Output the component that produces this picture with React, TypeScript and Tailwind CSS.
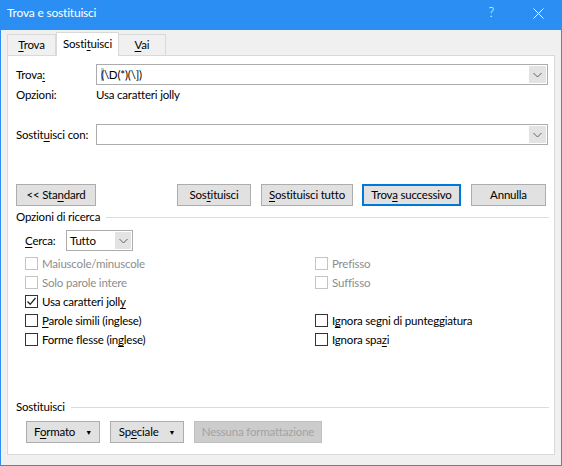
import React from "react";

const font = { fontFamily: 'Lato, "Noto Sans", "Liberation Sans", sans-serif' };

// label with one underlined mnemonic letter
function Mn({ text, at, className = "" }: { text: string; at?: number; className?: string }) {
  if (at === undefined) return <span className={"whitespace-nowrap " + className}>{text}</span>;
  return (
    <span className={"whitespace-nowrap " + className}>
      {text.slice(0, at)}
      <span className="underline underline-offset-2">{text[at]}</span>
      {text.slice(at + 1)}
    </span>
  );
}

function Chevron() {
  return (
    <svg width="9" height="6" viewBox="0 0 9 6" className="text-[#606060]">
      <path d="M0.5 1 L4.5 5 L8.5 1" fill="none" stroke="currentColor" strokeWidth="1" />
    </svg>
  );
}

function Combo({ children }: { children?: React.ReactNode }) {
  return (
    <div className="flex h-[21px] w-[452px] items-center border border-[#acacac] bg-white pl-[4px]">
      <div className="flex-1 truncate text-[11.5px] text-black">{children}</div>
      <div className="mr-[1px] flex h-[17px] w-[17px] items-center justify-center bg-[#e3e3e3]">
        <Chevron />
      </div>
    </div>
  );
}

function Btn({
  children,
  w,
  primary,
  disabled,
}: {
  children: React.ReactNode;
  w: string;
  primary?: boolean;
  disabled?: boolean;
}) {
  const base = "flex h-[22px] items-center justify-center whitespace-nowrap text-[11.5px] " + w;
  if (disabled)
    return <div className={base + " border border-[#bfbfbf] bg-[#cccccc] text-[#a3a3a3]"}>{children}</div>;
  if (primary)
    return <div className={base + " border-2 border-[#0078d7] bg-[#e1e1e1] text-black"}>{children}</div>;
  return <div className={base + " border border-[#adadad] bg-[#e1e1e1] text-black"}>{children}</div>;
}

function Check({
  label,
  at,
  checked,
  disabled,
}: {
  label: string;
  at?: number;
  checked?: boolean;
  disabled?: boolean;
}) {
  return (
    <div className="flex h-[19px] items-center">
      <div
        className={
          "flex h-[13px] w-[13px] items-center justify-center border bg-white " +
          (disabled ? "border-[#c4c4c4]" : "border-[#333333]")
        }
      >
        {checked && (
          <svg width="11" height="11" viewBox="0 0 11 11">
            <path d="M1.5 5.5 L4.2 8.3 L9.5 2" fill="none" stroke="#222" strokeWidth="1.3" />
          </svg>
        )}
      </div>
      <Mn text={label} at={at} className={"ml-[4px] text-[11.5px] " + (disabled ? "text-[#8d8d8d]" : "text-black")} />
    </div>
  );
}

function Section({ title }: { title: string }) {
  return (
    <div className="flex h-[16px] items-center pr-[5px]">
      <span className="whitespace-nowrap text-[11.5px] text-black">{title}</span>
      <div className="ml-[6px] h-px flex-1 bg-[#dcdcdc]" />
    </div>
  );
}

export default function App() {
  return (
    <div
      style={font}
      className="flex h-[466px] w-[562px] flex-col border border-t-0 border-[#2b8ef2] bg-[#f0f0f0] tracking-[-0.2px]"
    >
      {/* title bar */}
      <div className="-mx-px flex h-[30px] items-center bg-[#2b8ef2] pb-[4px] pl-[7px] text-white">
        <span className="flex-1 text-[12px]">Trova e sostituisci</span>
        <span className="mr-[39px] text-[13px] font-light">?</span>
        <svg width="11" height="11" viewBox="0 0 11 11" className="mr-[18px]">
          <path d="M0.5 0.5 L10.5 10.5 M10.5 0.5 L0.5 10.5" stroke="white" strokeWidth="1" />
        </svg>
      </div>

      {/* tabs */}
      <div className="flex h-[25px] items-end pl-[6px]">
        <div className="flex h-[21px] w-[49px] items-center justify-center border border-b-0 border-[#d9d9d9] text-[11.5px] text-black">
          <Mn text="Trova" at={0} />
        </div>
        <div className="relative z-10 -mb-px flex h-[24px] w-[63px] items-center justify-center border border-b-0 border-[#d9d9d9] bg-white pb-[2px] text-[11.5px] text-black">
          <Mn text="Sostituisci" at={5} />
        </div>
        <div className="flex h-[21px] w-[47px] items-center justify-center border border-b-0 border-l-0 border-[#d9d9d9] text-[11.5px] text-black">
          <Mn text="Vai" at={0} />
        </div>
      </div>

      {/* panel */}
      <div className="mx-[6px] h-[400px] border border-[#d9d9d9] bg-white pl-[8px]">
        <div className="mt-[8px] flex items-center">
          <Mn text="Trova:" at={5} className="w-[80px] text-[11.5px] text-black" />
          <Combo>
            <span className="bg-[#a9d0f2]">(</span>\D(*)(\])
          </Combo>
        </div>
        <div className="mt-[2px] flex h-[16px] items-center text-[11.5px] text-black">
          <span className="w-[80px]">Opzioni:</span>
          <span>Usa caratteri jolly</span>
        </div>
        <div className="mt-[21px] flex items-center">
          <Mn text="Sostituisci con:" at={6} className="w-[80px] text-[11.5px] text-black" />
          <Combo />
        </div>

        <div className="mt-[39px] flex items-center">
          <Btn w="w-[80px]">
            <Mn text="<< Standard" at={6} />
          </Btn>
          <div className="ml-[81px]">
            <Btn w="w-[74px]">
              <Mn text="Sostituisci" at={3} />
            </Btn>
          </div>
          <div className="ml-[10px]">
            <Btn w="w-[92px]">
              <Mn text="Sostituisci tutto" at={0} />
            </Btn>
          </div>
          <div className="ml-[9px]">
            <Btn w="w-[99px]" primary>
              <Mn text="Trova successivo" at={4} />
            </Btn>
          </div>
          <div className="ml-[10px]">
            <Btn w="w-[75px]">Annulla</Btn>
          </div>
        </div>

        <div className="mt-[3px]">
          <Section title="Opzioni di ricerca" />
        </div>

        <div className="mt-[5px] flex items-center pl-[9px]">
          <Mn text="Cerca:" at={0} className="w-[41px] text-[11.5px] text-black" />
          <div className="flex h-[21px] w-[67px] items-center border border-[#acacac] bg-white pl-[3px]">
            <span className="flex-1 text-[11.5px] text-black">Tutto</span>
            <div className="mr-[1px] flex h-[17px] w-[16px] items-center justify-center bg-[#e3e3e3]">
              <Chevron />
            </div>
          </div>
        </div>

        <div className="mt-[3px] grid grid-cols-[290px_1fr] pl-[9px]">
          <Check label="Maiuscole/minuscole" disabled />
          <Check label="Prefisso" disabled />
          <Check label="Solo parole intere" disabled />
          <Check label="Suffisso" disabled />
          <Check label="Usa caratteri jolly" at={18} checked />
          <div className="h-[19px]" />
          <Check label="Parole simili (inglese)" at={0} />
          <Check label="Ignora segni di punteggiatura" at={1} />
          <Check label="Forme flesse (inglese)" at={16} />
          <Check label="Ignora spazi" at={10} />
        </div>

        <div className="mt-[50px]">
          <Section title="Sostituisci" />
        </div>

        <div className="mt-[6px] flex items-center pl-[10px]">
          <Btn w="w-[74px]">
            <Mn text="Formato" at={1} />
            <span className="ml-[10px] text-[7px]">▼</span>
          </Btn>
          <div className="ml-[10px]">
            <Btn w="w-[74px]">
              <Mn text="Speciale" at={2} />
              <span className="ml-[10px] text-[7px]">▼</span>
            </Btn>
          </div>
          <div className="ml-[10px]">
            <Btn w="w-[128px]" disabled>
              Nessuna formattazione
            </Btn>
          </div>
        </div>
      </div>
    </div>
  );
}
